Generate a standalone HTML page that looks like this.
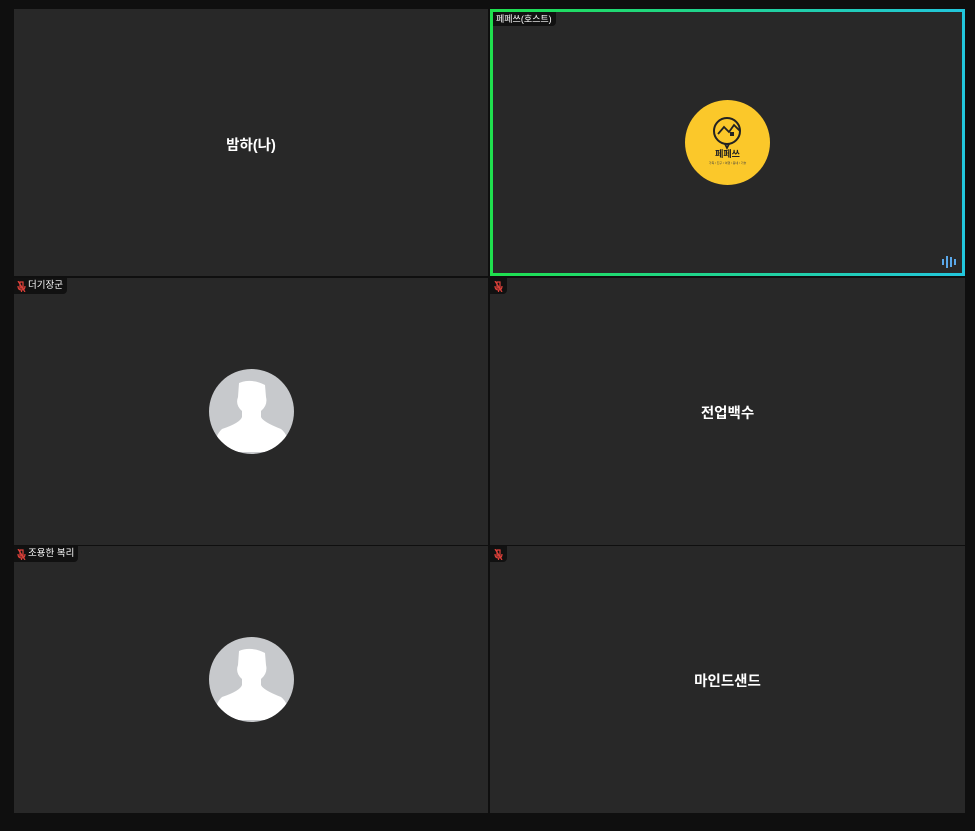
<!DOCTYPE html>
<html><head><meta charset="utf-8"><style>
body{margin:0;width:975px;height:831px;background:#0f0f0f;position:relative;overflow:hidden;font-family:"Liberation Sans","Noto Sans CJK KR",sans-serif}
.t{position:absolute;background:#282828;width:474px;height:267px}
.n{position:absolute;left:0;right:0;text-align:center;color:#fff;font-weight:bold;font-size:14.5px}
.lab{position:absolute;left:0;top:0;background:#111;color:#fff;font-size:9.5px;height:16px;line-height:16px;padding:0 4px 0 3px;border-radius:0 0 4px 0;display:flex;align-items:center;gap:2px}
.mic{width:9px;height:11px;display:inline-block}
.av{position:absolute;left:195px;top:91px;width:85px;height:85px;border-radius:50%;background:#c7c9cc;overflow:hidden}
</style></head><body>
<div class="t" style="left:14px;top:9px"><div class="n" style="top:125px">밤하(나)</div></div>
<div class="t" style="left:490px;top:9px;width:475px;box-sizing:border-box;border:3px solid;border-image:linear-gradient(90deg,#1fe04e,#22c6dc) 1">
<div class="lab" style="left:0;top:0;font-size:9px;height:14px;line-height:14px">페페쓰(호스트)</div>
<div style="position:absolute;left:192px;top:88px;width:85px;height:85px;border-radius:50%;background:#fbc82a">
<svg width="85" height="85" viewBox="0 0 85 85"><circle cx="42" cy="31" r="13" fill="none" stroke="#222" stroke-width="2"/><path d="M33 34 l6-7 5 5 5-7 6 6 M40 44 l2 4 2-4" fill="none" stroke="#222" stroke-width="1.8"/><rect x="45" y="32" width="4" height="4" fill="#222"/>
<text x="42.5" y="57" font-size="9" font-weight="bold" text-anchor="middle" fill="#222" font-family="Noto Sans CJK KR,sans-serif">페페쓰</text>
<text x="42.5" y="64" font-size="3" text-anchor="middle" fill="#444">가족 / 친구 / 여행 / 동네 / 기술</text></svg></div>
<svg style="position:absolute;right:5px;bottom:5px" width="16" height="12"><g fill="#5aa8ea"><rect x="1" y="3" width="2" height="6"/><rect x="5" y="0" width="2" height="12"/><rect x="9" y="1" width="2" height="10"/><rect x="13" y="3" width="2" height="6"/></g></svg>
</div>
<div class="t" style="left:14px;top:278px"><div class="lab"><svg class="mic" viewBox="0 0 9 11"><path d="M3 1h3v6H3z M1 5q0 4 3.5 4t3.5-4 M4.5 9v2 M1 0l7 11" fill="none" stroke="#e0413a" stroke-width="1.2"/></svg>더기장군</div>
<div class="av"><svg width="85" height="85"><path d="M30 14 q12-5 26 2 l1 12 q2 8-5 14 v6 q2 5 20 12 q8 6 9 23 H4 q2-17 9-23 q18-6 20-12 v-6 q-7-6-4-14z" fill="#fff"/></svg></div></div>
<div class="t" style="left:490px;top:278px;width:475px"><div class="lab" style="padding:0 4px"><svg class="mic" viewBox="0 0 9 11"><path d="M3 1h3v6H3z M1 5q0 4 3.5 4t3.5-4 M4.5 9v2 M1 0l7 11" fill="none" stroke="#e0413a" stroke-width="1.2"/></svg></div><div class="n" style="top:124px">전업백수</div></div>
<div class="t" style="left:14px;top:546px"><div class="lab"><svg class="mic" viewBox="0 0 9 11"><path d="M3 1h3v6H3z M1 5q0 4 3.5 4t3.5-4 M4.5 9v2 M1 0l7 11" fill="none" stroke="#e0413a" stroke-width="1.2"/></svg>조용한 복리</div>
<div class="av"><svg width="85" height="85"><path d="M30 14 q12-5 26 2 l1 12 q2 8-5 14 v6 q2 5 20 12 q8 6 9 23 H4 q2-17 9-23 q18-6 20-12 v-6 q-7-6-4-14z" fill="#fff"/></svg></div></div>
<div class="t" style="left:490px;top:546px;width:475px"><div class="lab" style="padding:0 4px"><svg class="mic" viewBox="0 0 9 11"><path d="M3 1h3v6H3z M1 5q0 4 3.5 4t3.5-4 M4.5 9v2 M1 0l7 11" fill="none" stroke="#e0413a" stroke-width="1.2"/></svg></div><div class="n" style="top:124px">마인드샌드</div></div>
</body></html>
